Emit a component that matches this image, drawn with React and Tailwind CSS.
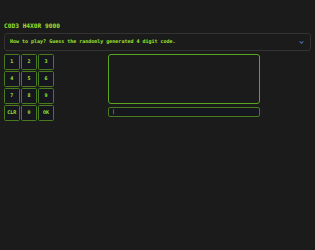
export default function App() {
  const keys = ["1","2","3","4","5","6","7","8","9","CLR","0","OK"];
  return (
    <div className="w-[315px] h-[250px] bg-[#1b1b1b] overflow-hidden" style={{fontFamily: '"DejaVu Sans Mono", monospace'}}>
      <div className="pt-[22px] px-[4px]">
        <div className="text-[6.2px] font-bold leading-[8px] text-[#9be22d] h-[8px]">C0D3 H4X0R 9000</div>
        <div className="mt-[3px] h-[18px] border border-[#333] rounded-[3px] flex items-center justify-between pl-[5px] pr-[6px]">
          <span className="text-[5px] font-bold text-[#9be22d]">How to play? Guess the randomly generated 4 digit code.</span>
          <svg width="5" height="3" viewBox="0 0 6 4"><path d="M0.5 0.5 L3 3 L5.5 0.5" stroke="#4a6fb0" strokeWidth="1.4" fill="none"/></svg>
        </div>
        <div className="mt-[3px] flex">
          <div className="grid grid-cols-3 gap-[1.5px] w-[50px]">
            {keys.map(k => (
              <div key={k} className="h-[15.5px] w-[15.5px] border-[1.5px] border-[#4a7a1e] rounded-[1.5px] bg-[#16161e] flex items-center justify-center text-[5px] font-bold text-[#9be22d]">{k}</div>
            ))}
          </div>
          <div className="ml-[54px] w-[152px] flex flex-col">
            <div className="h-[50px] border border-[#5ba61f] rounded-[3px]"></div>
            <div className="mt-[3px] h-[10px] border border-[#4a7a1e] rounded-[2px] bg-[#16161e] flex items-center px-[3px]">
              <span className="text-[5px] text-[#9be22d]">|</span>
            </div>
          </div>
        </div>
      </div>
    </div>
  );
}
